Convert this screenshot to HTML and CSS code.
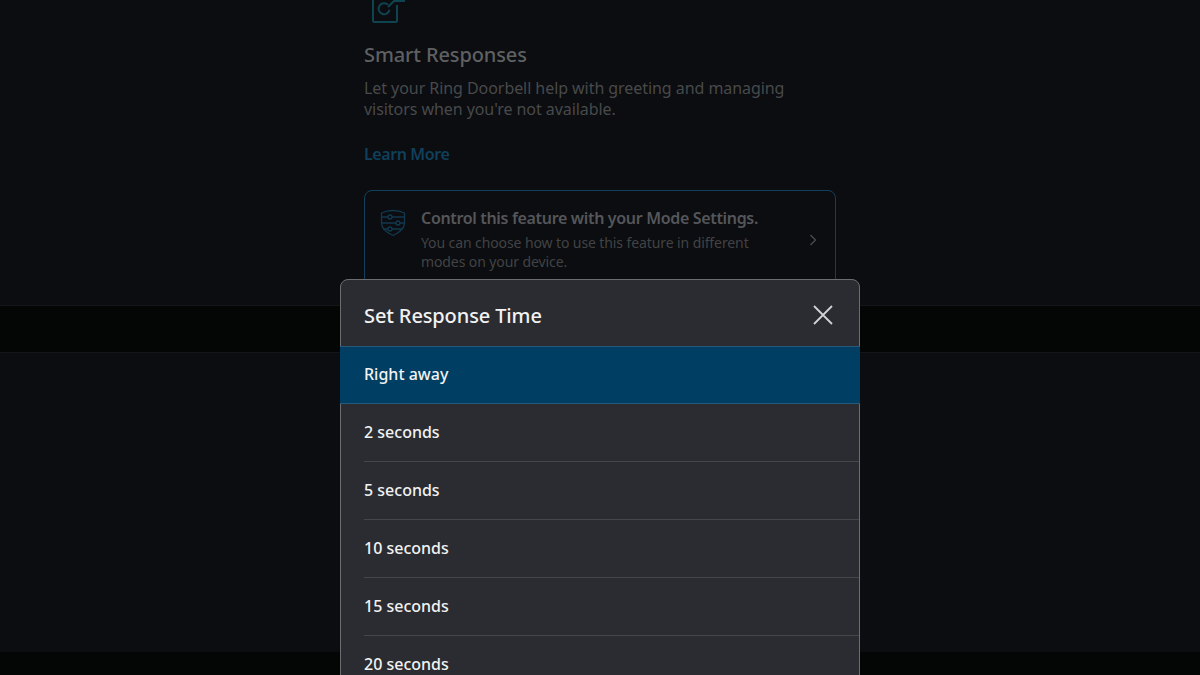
FILE: index.html
```html
<!DOCTYPE html>
<html lang="en">
<head>
  <meta charset="UTF-8" />
  <meta name="viewport" content="width=device-width, initial-scale=1" />
  <title>Smart Responses</title>
  <link rel="stylesheet" href="styles.css">
</head>
<body>

  <section class="page-top">
    <div class="content">
      <svg class="feature-icon" width="44" height="40" viewBox="0 0 44 40" fill="none" stroke="#0f4350" stroke-width="2">
        <path d="M9 0v24.500a1.500 1.500 0 0 0 1.500 1.500h21a1.500 1.500 0 0 0 1.500-1.500V9"/>
        <path d="M24 8.800a5.500 5.500 0 1 0 1.500 5"/>
        <path d="M24 11l6-6h11"/>
      </svg>
      <h2>Smart Responses</h2>
      <p class="intro">Let your Ring Doorbell help with greeting and managing visitors when you're not available.</p>
      <a class="learn-more">Learn More</a>
      <div class="mode-card">
        <svg class="mode-icon" width="26" height="28" viewBox="0 0 26 28" fill="none" stroke="#12394f" stroke-width="1.300">
          <path d="M13 1.500c4 0 8 .8 11.500 2.500v10c0 5.500-5 9.500-11.500 12.500C6.500 23.500 1.500 19.500 1.500 14V4C5 2.300 9 1.500 13 1.500z"/>
          <path d="M2 8h6M12 8h12M2 14h14M20 14h4.500M3 20h5M12 20h10"/>
          <circle cx="10" cy="8" r="2"/>
          <circle cx="18" cy="14" r="2"/>
          <circle cx="10" cy="20" r="2"/>
        </svg>
        <div class="mode-text">
          <strong>Control this feature with your Mode Settings.</strong>
          <span>You can choose how to use this feature in different modes on your device.</span>
        </div>
        <svg class="chevron" width="8" height="12" viewBox="0 0 8 12" fill="none" stroke="#4a4d50" stroke-width="1.300">
          <path d="M1.500 1l5 5-5 5"/>
        </svg>
      </div>
    </div>
  </section>
  <div class="band"></div>
  <section class="page-bottom"></section>
  <div class="band"></div>

  <div class="modal">
    <div class="modal-head">
      <h3>Set Response Time</h3>
      <svg width="20" height="20" viewBox="0 0 20 20" fill="none" stroke="#d2d3d4" stroke-width="1.800">
        <path d="M1 1l18 18M19 1L1 19"/>
      </svg>
    </div>
    <ul class="options">
      <li class="selected">Right away</li>
      <li>2 seconds</li>
      <li>5 seconds</li>
      <li>10 seconds</li>
      <li>15 seconds</li>
      <li>20 seconds</li>
    </ul>
  </div>

</body>
</html>
```

FILE: styles.css
```css
body {
  margin: 0;
  height: 675px;
  overflow: hidden;
  background: #040505;
  font-family: "Noto Sans", sans-serif;
  position: relative;
}
.page-top {
  height: 306px;
  overflow: hidden;
  background: #0b0d10;
  border-bottom: 1px solid #131517;
  box-sizing: border-box;
}
.band {
  height: 46px;
}
.page-bottom {
  height: 300px;
  background: #0b0d10;
  border-top: 1px solid #131517;
  box-sizing: border-box;
}
.content {
  width: 472px;
  margin: -4px auto 0;
}
.feature-icon {
  display: block;
}
h2 {
  margin: 5px 0 0;
  font-size: 20px;
  line-height: 28px;
  font-weight: 500;
  letter-spacing: -0.12px;
  color: #5f6062;
}
.intro {
  margin: 9px 0 0;
  font-size: 16px;
  line-height: 21px;
  letter-spacing: -0.06px;
  color: #48494b;
  width: 440px;
}
.learn-more {
  display: block;
  margin-top: 23px;
  font-size: 16px;
  line-height: 22px;
  font-weight: 600;
  letter-spacing: -0.4px;
  color: #10405c;
}
.mode-card {
  display: flex;
  align-items: center;
  margin-top: 25px;
  padding: 18px 18px 19px 15px;
  gap: 15px;
  border: 1px solid #12405c;
  border-radius: 8px;
}
.mode-icon {
  align-self: flex-start;
  flex: none;
}
.mode-text {
  flex: 1;
  margin-top: -2px;
}
.mode-text strong {
  display: block;
  font-size: 16px;
  line-height: 22px;
  font-weight: 600;
  letter-spacing: -0.33px;
  color: #55565a;
}
.mode-text span {
  display: block;
  margin-top: 4px;
  font-size: 14px;
  line-height: 19px;
  letter-spacing: -0.1px;
  color: #424345;
  width: 350px;
}
.modal {
  position: absolute;
  left: 340px;
  top: 279px;
  width: 520px;
  height: 420px;
  box-sizing: border-box;
  background: #2a2c31;
  border: 1px solid #6b6d70;
  border-radius: 8px;
  color: #f2f2f2;
}
.modal-head {
  display: flex;
  align-items: center;
  justify-content: space-between;
  height: 66px;
  padding: 4px 26px 0 23px;
  box-sizing: border-box;
}
h3 {
  margin: 0;
  font-size: 20px;
  font-weight: 500;
  letter-spacing: -0.12px;
}
.options {
  list-style: none;
  margin: 0;
  padding: 0;
}
.options li {
  height: 57px;
  margin-left: 23px;
  line-height: 57px;
  font-size: 16px;
  font-weight: 500;
  border-bottom: 1px solid #44464a;
}
.options li.selected {
  margin: 0 -1px;
  padding-left: 24px;
  background: #003e63;
  border-top: 1px solid #255a7a;
  border-bottom: 1px solid #255a7a;
  height: 56px;
  line-height: 55px;
}
```
